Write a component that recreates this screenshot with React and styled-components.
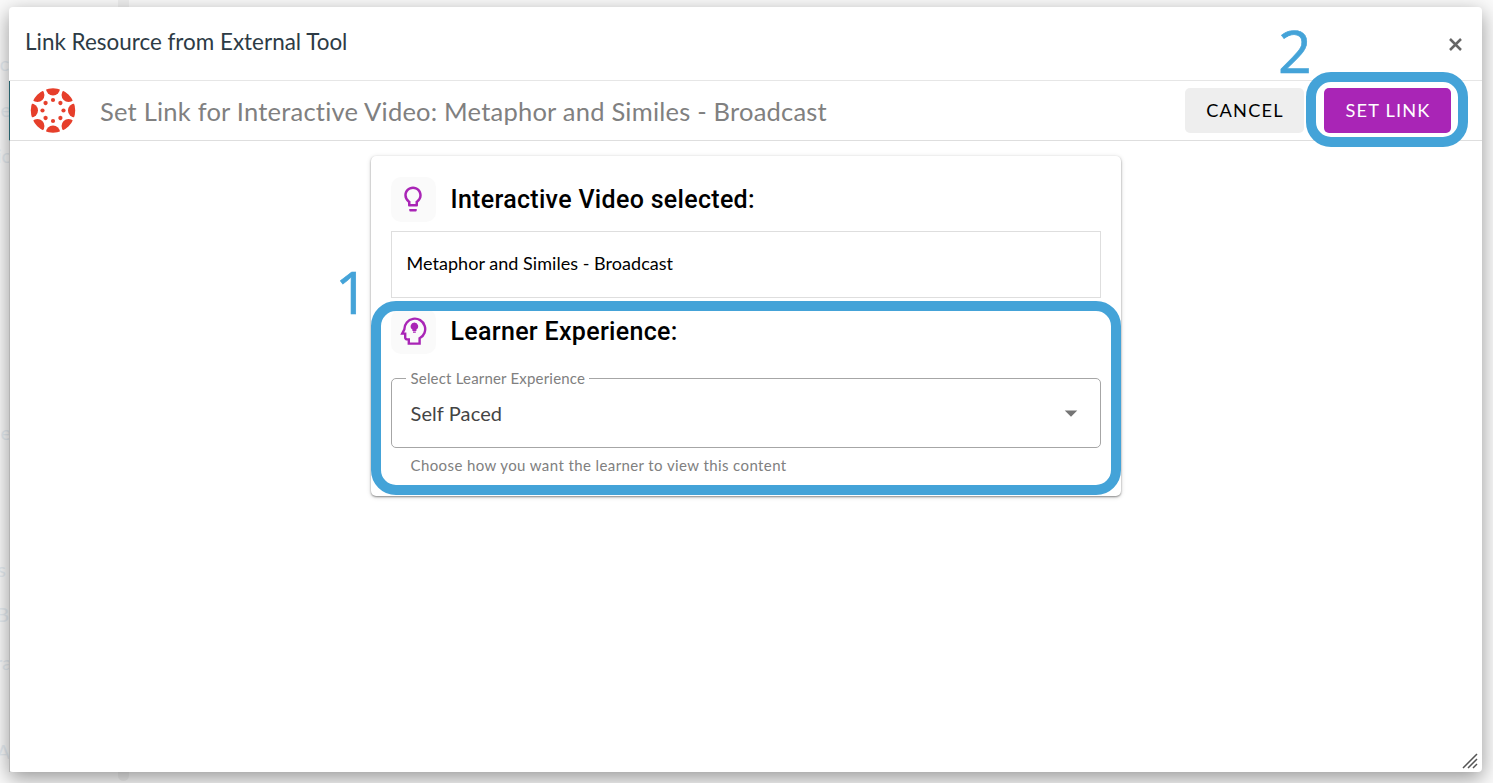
import React from "react";
import styled, { createGlobalStyle } from 'styled-components';
import { MdOutlineLightbulb, MdArrowDropDown } from 'react-icons/md';

const colors = {
    purple: '#A925B6',
    blue: '#44A3D8',
    red: '#E63F2B',
    slate: '#2D3B45',
    grey: '#808080',
    border: '#DEDEDE',
    fieldBorder: '#A6A6A6',
    white: '#FFFFFF',
};

const GlobalStyle = createGlobalStyle`
    * {
        box-sizing: border-box;
    }
    body {
        margin: 0;
        overflow: hidden;
        background: #FAFAFA;
        font-family: Lato, "Liberation Sans", sans-serif;
    }
`;
const Page = styled.div`
    position: relative;
    height: 783px;
    padding: 7px 11px 11px 9px;
    overflow: hidden;
`;
const Backdrop = styled.div`
    position: absolute;
    inset: 0;
    color: #E6ECF1;
    font-size: 20px;
`;
const BackdropText = styled.span`
    position: absolute;
    top: ${props => props.$top}px;
    right: calc(100% - ${props => props.$right}px);
    line-height: 24px;
`;
const BackdropTrack = styled.div`
    position: absolute;
    top: -10px;
    left: 118px;
    width: 11px;
    height: 791px;
    border-radius: 6px;
    background: #EFEFEF;
`;
const Dialog = styled.div`
    position: relative;
    display: flex;
    flex-direction: column;
    height: 765px;
    border-radius: 4px;
    background: ${colors.white};
    box-shadow: 0 6px 20px rgba(0, 0, 0, 0.4);
`;
const TitleBar = styled.header`
    display: flex;
    align-items: center;
    justify-content: space-between;
    height: 74px;
    padding: 0 20px 4px 16px;
    border-bottom: 1px solid #E6E6E6;
`;
const Title = styled.h1`
    margin: 0;
    color: ${colors.slate};
    font-size: 22.45px;
    font-weight: 400;
    line-height: 28px;
`;
const CloseButton = styled.button`
    display: flex;
    margin-top: 6px;
    padding: 0;
    border: 0;
    background: none;
`;
const Toolbar = styled.div`
    display: flex;
    align-items: center;
    height: 60px;
    padding: 0 31px 0 20px;
    border-left: 1px solid #27616B;
    border-bottom: 1px solid ${colors.border};
`;
const ToolbarTitle = styled.h2`
    flex-grow: 1;
    margin: 0 0 0 24px;
    color: ${colors.grey};
    font-size: 25.5px;
    font-weight: 400;
    letter-spacing: 0.22px;
    line-height: 30px;
    white-space: nowrap;
`;
const Button = styled.button`
    width: ${props => props.$width}px;
    height: 45px;
    margin-left: 20px;
    padding: 0 0 1px 1px;
    border: 0;
    border-radius: 5px;
    background: ${props => props.$primary ? colors.purple : '#EEEEEE'};
    color: ${props => props.$primary ? colors.white : '#000000'};
    font-family: inherit;
    font-size: 18.2px;
    letter-spacing: 1.2px;
    text-transform: uppercase;
`;
const Content = styled.main`
    display: flex;
    flex-grow: 1;
    justify-content: center;
    align-items: flex-start;
    padding: 15px 1px 0 0;
    border-left: 1px solid #B4B4B4;
`;
const Card = styled.section`
    width: 750px;
    height: 340px;
    padding: 21px 20px 0;
    border-radius: 5px;
    box-shadow: 0 1px 2px rgba(0, 0, 0, 0.4), 0 1px 5px rgba(0, 0, 0, 0.16);
`;
const SectionHeader = styled.div`
    display: flex;
    align-items: center;
    height: 44px;
`;
const IconTile = styled.span`
    display: flex;
    align-items: center;
    justify-content: center;
    width: 45px;
    height: 45px;
    border-radius: 10px;
    background: #FAFAFA;
    color: ${colors.purple};
`;
const SectionTitle = styled.h3`
    margin: 1px 0 0 15px;
    color: #000000;
    font-family: Roboto, sans-serif;
    font-size: 25px;
    font-weight: 500;
    letter-spacing: 0.31px;
    white-space: nowrap;
`;
const SelectedItem = styled.div`
    display: flex;
    align-items: center;
    height: 67px;
    margin: 10px 0 11px;
    padding: 0 15px 4px;
    border: 1px solid ${colors.border};
    color: #000000;
    font-size: 18px;
    letter-spacing: 0.04px;
`;
const SelectField = styled.fieldset`
    display: flex;
    align-items: center;
    justify-content: space-between;
    min-width: 0;
    height: 79px;
    margin: 16px 0 0;
    padding: 0 14px 9px 14px;
    border: 1px solid ${colors.fieldBorder};
    border-radius: 5px;
    color: #444444;
    font-size: 20px;
`;
const FieldLabel = styled.legend`
    padding: 0 4px 0 5px;
    color: ${colors.grey};
    font-size: 15px;
    letter-spacing: 0.19px;
    line-height: 18px;
    white-space: nowrap;
`;
const FieldValue = styled.span`
    margin-left: 5px;
    letter-spacing: 0.1px;
`;
const HelperText = styled.p`
    margin: 8px 0 0 20px;
    color: ${colors.grey};
    font-size: 15px;
    letter-spacing: 0.4px;
    line-height: 18px;
`;
const Highlight = styled.div`
    position: absolute;
    top: ${props => props.$top}px;
    left: ${props => props.$left}px;
    width: ${props => props.$width}px;
    height: ${props => props.$height}px;
    border: 10px solid ${colors.blue};
    border-radius: 25px;
    pointer-events: none;
`;
const StepNumber = styled.span`
    position: absolute;
    top: ${props => props.$top}px;
    left: ${props => props.$left}px;
    color: ${colors.blue};
    font-family: "Open Sans", sans-serif;
    font-size: 59px;
    line-height: 60px;
    -webkit-text-stroke: 0.6px ${colors.blue};
`;
const ResizeHandle = styled.svg`
    position: absolute;
    right: 4px;
    bottom: 3px;
`;

const backdropText = [
    { text: 'c', top: 51, right: 9 },
    { text: 'ne', top: 97, right: 11 },
    { text: 'ic', top: 143, right: 11 },
    { text: 'ne', top: 420, right: 11 },
    { text: 's', top: 557, right: 6 },
    { text: 'B', top: 602, right: 9 },
    { text: 'ra', top: 650, right: 12 },
    { text: 'A', top: 739, right: 10 },
];

const CanvasLogo = () => (
    <svg width="46" height="46" viewBox="-23 -22.5 46 46" fill={colors.red}>
        <clipPath id="disc">
            <circle r="22.2" />
        </clipPath>
        {[0, 45, 90, 135, 180, 225, 270, 315].map((angle) => (
            <g key={angle} transform={`rotate(${angle})`}>
                <circle cy="-22" r="7" clipPath="url(#disc)" />
                <circle cy="-10.5" r="2.1" />
            </g>
        ))}
    </svg>
);

const HeadBulbIcon = () => (
    <svg width="27" height="30" viewBox="0 0 27 30" fill="currentColor">
        <path
            d="M8.8 27.6V23.4H7.2a2 2 0 0 1-2-2V17.6H2.2L4.4 13.2A10.4 10.4 0 1 1 19.6 22.3V27.6Z"
            fill="none"
            stroke="currentColor"
            strokeWidth="2.4"
        />
        <path d="M14.4 6.5a3.8 3.8 0 0 0-2 7V15h4v-1.5a3.8 3.8 0 0 0-2-7M13 15.6h2.8v1.2H13z" />
    </svg>
);

const App = () => (
    <Page>
        <GlobalStyle />
        <Backdrop aria-hidden="true">
            <BackdropTrack />
            {backdropText.map((item) => (
                <BackdropText key={item.top} $top={item.top} $right={item.right}>{item.text}</BackdropText>
            ))}
        </Backdrop>
        <Dialog role="dialog">
            <TitleBar>
                <Title>Link Resource from External Tool</Title>
                <CloseButton aria-label="Close">
                    <svg width="13" height="13" viewBox="0 0 13 13" stroke="#666666" strokeWidth="2.5">
                        <path d="M1 1l11 11M12 1L1 12" />
                    </svg>
                </CloseButton>
            </TitleBar>
            <Toolbar>
                <CanvasLogo />
                <ToolbarTitle>Set Link for Interactive Video: Metaphor and Similes - Broadcast</ToolbarTitle>
                <Button $width={119}>Cancel</Button>
                <Button $width={127} $primary>Set Link</Button>
            </Toolbar>
            <Content>
                <Card>
                    <SectionHeader>
                        <IconTile><MdOutlineLightbulb size={30} /></IconTile>
                        <SectionTitle>Interactive Video selected:</SectionTitle>
                    </SectionHeader>
                    <SelectedItem>Metaphor and Similes - Broadcast</SelectedItem>
                    <SectionHeader>
                        <IconTile><HeadBulbIcon /></IconTile>
                        <SectionTitle>Learner Experience:</SectionTitle>
                    </SectionHeader>
                    <SelectField>
                        <FieldLabel>Select Learner Experience</FieldLabel>
                        <FieldValue>Self Paced</FieldValue>
                        <MdArrowDropDown size={30} color="#757575" />
                    </SelectField>
                    <HelperText>Choose how you want the learner to view this content</HelperText>
                </Card>
            </Content>
            <ResizeHandle width="16" height="16" viewBox="0 0 16 16" stroke="#555555" strokeWidth="1.5">
                <path d="M1 15L15 1M6 15l9-9M11 15l4-4" />
            </ResizeHandle>
        </Dialog>
        <StepNumber $top={261} $left={335}>1</StepNumber>
        <StepNumber $top={20} $left={1278}>2</StepNumber>
        <Highlight $top={301} $left={371} $width={750} $height={194} />
        <Highlight $top={72} $left={1306} $width={162} $height={75} />
    </Page>
);

export default App;
